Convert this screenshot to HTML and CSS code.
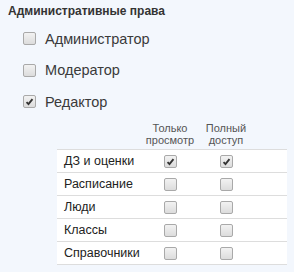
FILE: index.html
```html
<!DOCTYPE html>
<html lang="ru">
<head>
<meta charset="utf-8">
<link rel="stylesheet" href="styles.css">
</head>
<body>
<div class="panel">
  <div class="title">Административные права</div>
  <div class="roles">
    <label class="role"><span class="cb"></span><span>Администратор</span></label>
    <label class="role"><span class="cb"></span><span>Модератор</span></label>
    <label class="role"><span class="cb on"><svg viewBox="0 0 13 13"><path d="M3 7.2 L5.3 9.5 L10 3.6" /></svg></span><span>Редактор</span></label>
  </div>
  <div class="perm">
    <div class="heads">
      <div></div>
      <div class="head">Только<br>просмотр</div>
      <div class="head">Полный<br>доступ</div>
    </div>
    <div class="table">
      <div class="row"><div class="name">ДЗ и оценки</div><div class="c"><span class="cb on"><svg viewBox="0 0 13 13"><path d="M3 7.2 L5.3 9.5 L10 3.6" /></svg></span></div><div class="c"><span class="cb on"><svg viewBox="0 0 13 13"><path d="M3 7.2 L5.3 9.5 L10 3.6" /></svg></span></div></div>
      <div class="row"><div class="name">Расписание</div><div class="c"><span class="cb"></span></div><div class="c"><span class="cb"></span></div></div>
      <div class="row"><div class="name">Люди</div><div class="c"><span class="cb"></span></div><div class="c"><span class="cb"></span></div></div>
      <div class="row"><div class="name">Классы</div><div class="c"><span class="cb"></span></div><div class="c"><span class="cb"></span></div></div>
      <div class="row"><div class="name">Справочники</div><div class="c"><span class="cb"></span></div><div class="c"><span class="cb"></span></div></div>
    </div>
  </div>
</div>
</body>
</html>
```

FILE: styles.css
```css
html, body {
  margin: 0;
  padding: 0;
  background: #f3f7fd;
}
body {
  width: 294px;
  height: 272px;
  overflow: hidden;
  font-family: "Liberation Sans", Arial, sans-serif;
  color: #333;
}
.panel {
  padding: 3px 7px 0 8px;
}
.title {
  font-size: 12px;
  font-weight: bold;
  line-height: 16px;
  color: #333;
}
.roles {
  margin-top: 4px;
  padding-left: 15px;
  display: flex;
  flex-direction: column;
}
.role {
  display: flex;
  align-items: center;
  gap: 9px;
  height: 31.5px;
  font-size: 14.5px;
  color: #3a3a3a;
}
.cb {
  box-sizing: border-box;
  width: 13px;
  height: 13px;
  border: 1px solid #a9a9a9;
  border-radius: 2px;
  background: linear-gradient(#f2f2f2, #dcdcdc);
  display: inline-flex;
  flex: none;
}
.cb svg {
  width: 11px;
  height: 11px;
}
.cb path {
  fill: none;
  stroke: #333;
  stroke-width: 2.2;
}
.perm {
  margin-left: 49px;
  margin-top: 4.5px;
}
.heads, .row {
  display: grid;
  grid-template-columns: 85px 56px 56px;
}
.heads {
  height: 24px;
  margin-bottom: 3px;
}
.head {
  font-size: 11px;
  line-height: 12px;
  color: #555;
  text-align: center;
}
.table {
  background: #fff;
  border-bottom: 1px solid #ddd;
}
.row {
  box-sizing: border-box;
  height: 23px;
  border-top: 1px solid #ddd;
  align-items: center;
}
.name {
  padding-left: 7px;
  font-size: 12.5px;
  color: #222;
}
.c {
  display: flex;
  justify-content: center;
}
```
